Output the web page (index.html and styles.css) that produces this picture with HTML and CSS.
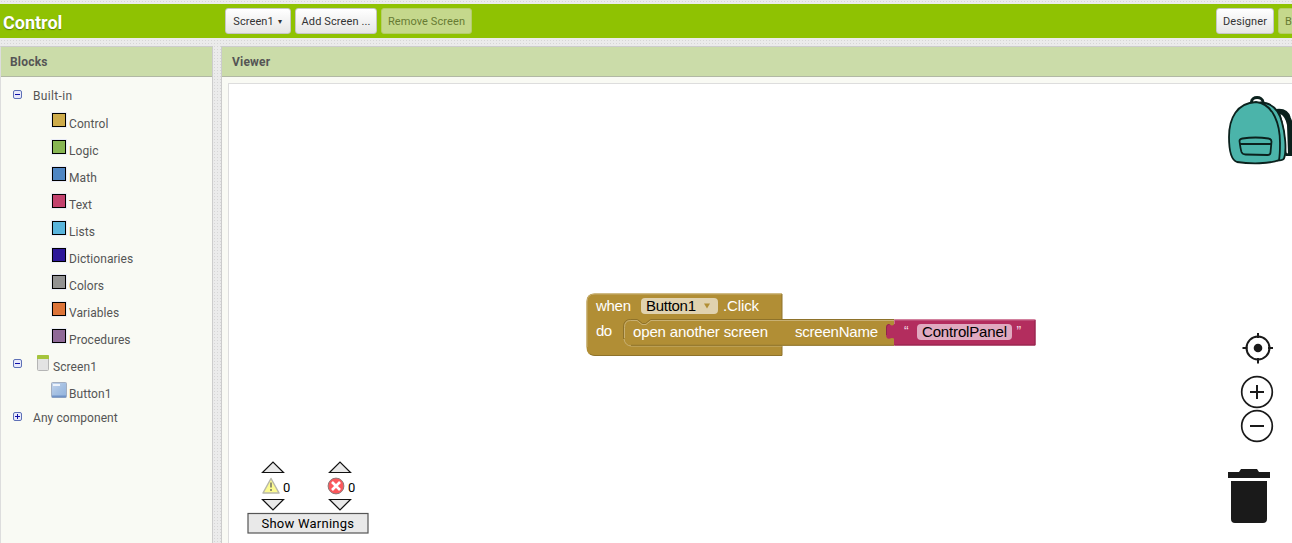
FILE: index.html
```html
<!DOCTYPE html>
<html lang="en">
<head>
<meta charset="utf-8">
<title>Control</title>
<link rel="stylesheet" href="styles.css">
</head>
<body>
<header class="toolbar">
  <h1 class="project">Control</h1>
  <div class="screens">
    <button class="btn w-screen">Screen1 <span class="caret">▾</span></button>
    <button class="btn w-add">Add Screen ...</button>
    <button class="btn off w-remove">Remove Screen</button>
  </div>
  <div class="modes">
    <button class="btn w-designer">Designer</button>
    <button class="btn off w-blocks">B</button>
  </div>
</header>
<main class="columns">
  <section class="panel palette">
    <h2 class="panel-title">Blocks</h2>
    <div class="tree">
      <div class="row root"><svg class="toggle" width="9" height="9"><rect class="tbox" x=".5" y=".5" width="8" height="8" rx="1.5"/><path class="tsign" d="M2 4.5h5"/></svg><span>Built-in</span></div>
      <div class="row leaf"><i class="swatch control"></i><span>Control</span></div>
      <div class="row leaf"><i class="swatch logic"></i><span>Logic</span></div>
      <div class="row leaf"><i class="swatch math"></i><span>Math</span></div>
      <div class="row leaf"><i class="swatch text"></i><span>Text</span></div>
      <div class="row leaf"><i class="swatch lists"></i><span>Lists</span></div>
      <div class="row leaf"><i class="swatch dict"></i><span>Dictionaries</span></div>
      <div class="row leaf"><i class="swatch colors"></i><span>Colors</span></div>
      <div class="row leaf"><i class="swatch vars"></i><span>Variables</span></div>
      <div class="row leaf"><i class="swatch procs"></i><span>Procedures</span></div>
      <div class="row screen"><svg class="toggle" width="9" height="9"><rect class="tbox" x=".5" y=".5" width="8" height="8" rx="1.5"/><path class="tsign" d="M2 4.5h5"/></svg><svg class="phone" width="12" height="16"><rect x=".5" y=".5" width="11" height="15" rx="1" fill="#e3e3e3" stroke="#b5b5b5"/><path d="M0 1q0-1 1-1h10q1 0 1 1v3H0z" fill="#a5c43c"/></svg><span>Screen1</span></div>
      <div class="row leaf button"><svg class="bicon" width="16" height="16"><defs><linearGradient id="bl" x2="1" y2="1"><stop stop-color="#c3d5ed"/><stop offset=".5" stop-color="#a5c0e2"/><stop offset="1" stop-color="#91b2dd"/></linearGradient></defs><rect x=".5" y=".5" width="15" height="15" rx="1" fill="url(#bl)" stroke="#a3aec0"/><path d="M2 2h7v2H2z" fill="#edf3fb"/><path d="M1 14.5h14" stroke="#7093c6" stroke-width="2"/></svg><span>Button1</span></div>
      <div class="row any"><svg class="toggle" width="9" height="9"><rect class="tbox" x=".5" y=".5" width="8" height="8" rx="1.5"/><path class="tsign" d="M2 4.5h5M4.5 2v5"/></svg><span>Any component</span></div>
    </div>
  </section>
  <section class="panel viewer">
    <h2 class="panel-title">Viewer</h2>
    <div class="workspace">
      <svg class="canvas" width="1063" height="459" viewBox="229 84 1063 459">
        <g class="backpack" stroke="#0b211d" stroke-width="1.800" fill="#4bb4aa" stroke-linejoin="round">
          <path d="M1251.500 102c0-6 11-6 11.500 0" fill="none" stroke-width="3"/>
          <path d="M1276 110c7-1 12 1 14 8 1 3 2 4 2 8v29h-6c2-12-2-34-10-45z" fill="#0b211d"/>
          <path d="M1280.500 114q5 3 6.500 11l1 28q-2 2-2-6-1-18-5.500-33z" fill="#fff" stroke="none"/>
          <path d="M1260 102.500c13 0 19 8 22 20 3 10 5 28 2 36-1 2-4 2-7 2z"/>
          <path d="M1229 137c0-19 8-34 27-35 18 2 24 23 24 41 0 9 0 12-1 17-9 4-29 4-42 2-6-2-8-11-8-25z"/>
          <path d="M1239.500 141q0-2 3-2.500 13-2 26 0 3 .5 3 3l-1 11q0 2.500-3 2.500l-22-.5q-3 0-4-2.500-1-3-2-11zM1240 144h31"/>
        </g>
        <path class="ev" d="M594 293.500H782V355.500H594.500q-8 0-8-8V301.500q0-8 8-8z"/>
        <path class="hi" d="M587 347V302q0-8 8-8H782"/>
        <path class="lo" d="M590 354q2 1.500 5 1.500H782V346M782 294v25"/>
        <path class="ev" d="M631 320H894v25.500H631q-7 0-7-7V327q0-7 7-7z"/>
        <path class="lo" d="M623.500 339V327q0-7.500 7-7.500h7l5 4h3l5-4H894"/>
        <path class="hi" d="M624.500 338V327.500q0-7 6-7h6.500l5 4h4l5-4H894M624 339q1 6.500 7 7H782"/>
        <path class="lo" d="M631 345.300H894"/>
        <path class="str" d="M894 319.500H1035.500V345.500H894v-7q-2-1-4 0-4 1-4-4v-6q0-5 4-4 2 2 4 0z"/>
        <path class="strlo" d="M894.500 345H1035V320M886.500 335v-7q0-4 3-3.500"/>
        <path class="strhi" d="M894.500 324v-4h140"/>
        <rect x="641" y="298" width="77" height="16" rx="4" fill="#e0d2af"/>
        <path d="M704 303.500h6l-3 5z" fill="#b18e35"/>
        <rect x="917" y="324" width="95" height="16" rx="4" fill="#e0aac0"/>
        <g class="lab">
          <text x="596" y="311" textLength="35">when</text>
          <text x="646" y="311" textLength="50" class="blk">Button1</text>
          <text x="723" y="311" textLength="36">.Click</text>
          <text x="596" y="336" textLength="16">do</text>
          <text x="633" y="337" textLength="135">open another screen</text>
          <text x="795" y="337" textLength="83">screenName</text>
          <text x="904" y="336" class="quote">“</text>
          <text x="922" y="337" textLength="85" class="blk">ControlPanel</text>
          <text x="1016.500" y="336" class="quote">”</text>
        </g>
        <g fill="none" stroke="#1a1a1a" stroke-width="2">
          <circle cx="1258" cy="348" r="11.500"/>
          <path d="M1258 333v5M1258 358v5.500M1242.500 348h5M1268 348h5"/>
          <circle cx="1258" cy="348" r="4.300" fill="#1a1a1a" stroke="none"/>
          <circle cx="1257" cy="392" r="15.300" stroke-width="1.700"/>
          <path d="M1257 385v14M1250 392h14"/>
          <circle cx="1257" cy="426" r="15.300" stroke-width="1.700"/>
          <path d="M1250 426h14"/>
        </g>
        <path fill="#1a1a1a" d="M1228 472h11l2-3h16l2 3h11v6h-42zM1231 481h36v38q0 4-4 4h-28q-4 0-4-4z"/>
        <g fill="#e9e9e9" stroke="#111" stroke-width="1.200">
          <path d="M262.500 472.500h21l-10.500-10.500z"/>
          <path d="M329.500 472.500h21l-10.500-10.500z"/>
          <path d="M262.500 499.500h21l-10.500 10.500z"/>
          <path d="M329.500 499.500h21l-10.500 10.500z"/>
          <rect x="248" y="513.500" width="120" height="19.500" stroke="#555"/>
        </g>
        <path d="M271 478.500l8 14.500h-16z" fill="#fcfb91" stroke="#b8b8aa" stroke-linejoin="round" stroke-width="1.500"/>
        <path d="M271 482.500v5M271 489v2" stroke="#8a8a6b" stroke-width="1.800"/>
        <circle cx="336" cy="486" r="7.900" fill="#fb585c" stroke="#8c7777"/>
        <path d="M332 482l8 8M340 482l-8 8" stroke="#fff" stroke-width="2.600"/>
        <g class="warn">
          <text x="283" y="492">0</text>
          <text x="348" y="492">0</text>
          <text x="261.500" y="528" textLength="92.500">Show Warnings</text>
        </g>
      </svg>
    </div>
  </section>
</main>
</body>
</html>
```
FILE: styles.css
```css
* { box-sizing: border-box; }
body {
  margin: 0;
  height: 543px;
  overflow: hidden;
  padding-top: 4px;
  font-family: Roboto, sans-serif;
  background-color: #ebebeb;
  background-image: radial-gradient(#d6d6d6 0.6px, transparent 0.9px);
  background-size: 3px 3px;
}
.toolbar {
  display: flex;
  height: 34px;
  background: #8fc202;
}
.project {
  margin: 0;
  width: 225px;
  padding-left: 3px;
  font-size: 18px;
  line-height: 37px;
  color: #fff;
  text-shadow: 0 1px 1px #5c7d00;
}
.screens, .modes { display: flex; gap: 4px; padding-top: 4px; }
.modes { margin-left: auto; width: 76px; }
.btn {
  flex: none;
  height: 26px;
  padding: 1px 0 0;
  border: 1px solid #c6c6c6;
  border-radius: 3px;
  background: linear-gradient(#fff, #e6e6e6);
  font: 11px/23px Roboto, sans-serif;
  letter-spacing: .1px;
  color: #333;
  white-space: nowrap;
}
.off { background: #c5d88c; border-color: #b5cd6b; color: #677b33; }
.caret { font-size: 8px; margin-left: 1px; vertical-align: 1px; line-height: 1; }
.w-screen { width: 66px; padding-right: 1px; }
.w-add { width: 82px; }
.w-remove { width: 91px; }
.w-designer { width: 58px; }
.w-blocks { width: 52px; padding-left: 6px; text-align: left; }
.columns { display: flex; gap: 8px; margin-top: 8px; height: 497px; }
.panel { flex: none; border: 1px solid #ccc; border-bottom: 0; background: #f9faf4; }
.palette { width: 213px; border-left-color: #ddd; }
.viewer { width: 1090px; }
.panel-title {
  margin: 0;
  height: 30px;
  padding-left: 10px;
  border-bottom: 1px solid #b1b8a4;
  background: #cbdca9;
  font-size: 12px;
  letter-spacing: .2px;
  line-height: 30px;
  color: #555;
}
.palette .panel-title { padding-left: 9px; }
.tree { padding-top: 6px; font-size: 12px; letter-spacing: .07px; color: #555; }
.row { display: flex; align-items: center; height: 27px; line-height: 27px; }
.root { padding-left: 12px; gap: 11px; margin-bottom: 1px; }
.root span { letter-spacing: .35px; }
.leaf { padding-left: 51px; gap: 3px; }
.swatch { width: 14px; height: 14px; border: 1px solid #000; margin-bottom: 9px; box-shadow: 0 0 0 1px #e9ebf7; }
.control { background: #cdab4b; }
.logic { background: #88b653; }
.math { background: #4f86c3; }
.text { background: #c3426e; }
.lists { background: #59b4dc; }
.dict { background: #2d1799; }
.colors { background: #929292; }
.vars { background: #dc743a; }
.procs { background: #8f6997; }
.screen { padding-left: 12px; }
.screen .toggle { margin-bottom: 8px; }
.phone { margin: 0 4px 9px 15px; }
.button { padding-left: 50px; gap: 2px; }
.bicon { margin-bottom: 9px; }
.any { height: 22px; line-height: 22px; padding-left: 12px; gap: 11px; margin-top: -1px; }
.root .toggle { margin-bottom: 4px; }
.any .toggle { margin-bottom: 3px; }
.toggle { flex: none; }
.tbox { fill: #e8e9fb; stroke: #5e70b6; }
.tsign { stroke: #1010a8; stroke-width: 1; }
.workspace {
  margin: 6px 0 0 6px;
  width: 1082px;
  height: 461px;
  border: 1px solid #ddd;
  background: #fff;
}
.canvas { display: block; }
.ev { fill: #b18e35; }
.hi, .lo, .strhi, .strlo { fill: none; stroke-width: 1; }
.hi { stroke: #c8b072; }
.lo { stroke: #8e722a; }
.str { fill: #b32d5e; }
.strhi { stroke: #ca6c8e; }
.strlo { stroke: #8f244b; }
.lab { font: 15px "Liberation Sans", Arial, sans-serif; fill: #fff; }
.blk { fill: #000; }
.quote { font-size: 14px; fill: #f3dfe7; }
.warn { font: 13px Roboto, sans-serif; fill: #000; }
```
